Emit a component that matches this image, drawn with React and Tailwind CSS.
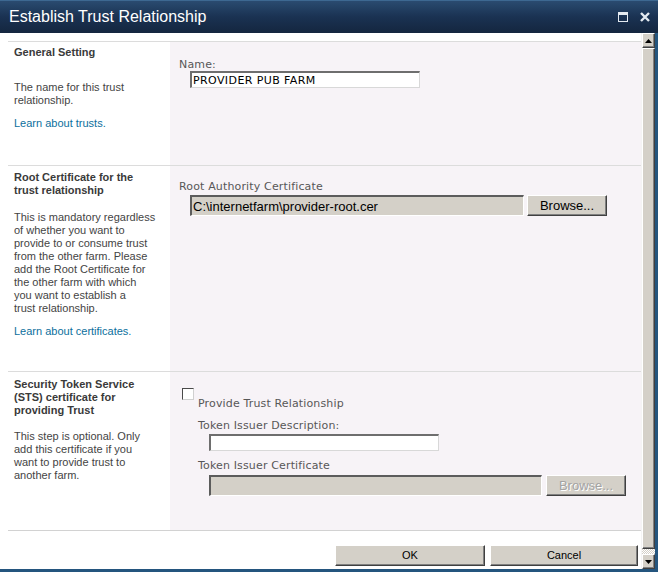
import React from 'react';

const tahoma = "font-['Liberation_Sans',Arial,sans-serif]";
const verdana = "font-['DejaVu_Sans',Verdana,sans-serif]";

const inputBox =
  'bg-white border-t-2 border-l-2 border-b border-r border-t-[#6e6e6e] border-l-[#6e6e6e] border-b-[#d8d8d8] border-r-[#d8d8d8]';
const fileBox =
  'bg-[#d4d0c8] border-t-2 border-l-2 border-b border-r border-t-[#5c5c5c] border-l-[#5c5c5c] border-b-[#ffffff] border-r-[#ffffff]';
const button3d =
  'bg-[#d4d0c8] border border-t-white border-l-white border-b-[#404040] border-r-[#404040] shadow-[inset_-1px_-1px_0_#808080]';

const Label = ({ children, className = '' }) => (
  <div className={`${verdana} text-[11px] leading-[13px] tracking-[0.15px] text-[#575757] whitespace-nowrap ${className}`}>
    {children}
  </div>
);

const Section = ({ left, right, leftPad, rightPad }) => (
  <div className="flex border-t border-[#dcdcdc]">
    <div className={`w-[162px] shrink-0 px-[6px] bg-white ${tahoma} text-[11px] leading-[13px] text-[#444] whitespace-nowrap ${leftPad}`}>
      {left}
    </div>
    <div className={`flex-1 bg-[#f7f3f7] ${rightPad}`}>{right}</div>
  </div>
);

const Heading = ({ children }) => <div className="font-bold text-[#3a3a3a]">{children}</div>;
const Link = ({ children }) => <div className="mt-[10px] text-[#0c6f9d]">{children}</div>;

const BrowseButton = ({ disabled }) => (
  <div
    className={`${button3d} w-[80px] h-[21px] flex items-center justify-center ${tahoma} text-[13px] leading-[15px] ${
      disabled ? 'text-[#a3a3a3] [text-shadow:1px_1px_0_#fff]' : 'text-black'
    }`}
  >
    Browse...
  </div>
);

const ScrollArrow = ({ down }) => (
  <div className={`${button3d} h-[15px] flex items-center justify-center`}>
    <svg width="7" height="4" viewBox="0 0 7 4">
      {down ? <path d="M0 0h7L3.5 4z" fill="#000" /> : <path d="M0 4h7L3.5 0z" fill="#000" />}
    </svg>
  </div>
);

export default function App() {
  return (
    <div className="w-[658px] h-[572px] flex flex-col bg-white overflow-hidden">
      {/* title bar */}
      <div className="h-[33px] shrink-0 flex items-center justify-between bg-gradient-to-b from-[#2a4b70] via-[#1a3252] to-[#14263f] border-t border-[#3d6891]">
        <span className={`pl-[9px] ${tahoma} text-[16px] leading-[18px] text-white`}>Establish Trust Relationship</span>
        <div className="flex items-center gap-[12px] pr-[8px]">
          <svg width="10" height="10" viewBox="0 0 10 10">
            <rect x="0.5" y="0.5" width="9" height="9" fill="none" stroke="#e4eaf0" strokeWidth="1" />
            <rect x="0.5" y="0.5" width="9" height="2.5" fill="#e4eaf0" />
          </svg>
          <svg width="10" height="10" viewBox="0 0 10 10">
            <path d="M1 1L9 9M9 1L1 9" stroke="#e4eaf0" strokeWidth="2.4" />
          </svg>
        </div>
      </div>

      <div className="flex-1 flex border-r-[3px] border-b-[3px] border-[#24557e]">
        <div className="flex-1 flex flex-col pl-[8px] pt-[8px]">
          <Section
            leftPad="pt-[4px]"
            rightPad="pt-[16px] pl-[9px] h-[123px]"
            left={
              <>
                <Heading>General Setting</Heading>
                <div className="mt-[22px]">
                  The name for this trust
                  <br />
                  relationship.
                </div>
                <Link>Learn about trusts.</Link>
              </>
            }
            right={
              <>
                <Label>Name:</Label>
                <div className={`${inputBox} ml-[11px] w-[230px] h-[17px] flex items-center pl-[1px]`}>
                  <span className={`${verdana} text-[11px] leading-[13px] tracking-[0.4px] text-black`}>PROVIDER PUB FARM</span>
                </div>
              </>
            }
          />
          <Section
            leftPad="pt-[5px]"
            rightPad="pt-[14px] pl-[9px] h-[205px]"
            left={
              <>
                <Heading>
                  Root Certificate for the
                  <br />
                  trust relationship
                </Heading>
                <div className="mt-[14px]">
                  This is mandatory regardless
                  <br />
                  of whether you want to
                  <br />
                  provide to or consume trust
                  <br />
                  from the other farm. Please
                  <br />
                  add the Root Certificate for
                  <br />
                  the other farm with which
                  <br />
                  you want to establish a
                  <br />
                  trust relationship.
                </div>
                <Link>Learn about certificates.</Link>
              </>
            }
            right={
              <>
                <Label>Root Authority Certificate</Label>
                <div className="mt-[2px] ml-[11px] flex gap-[3px]">
                  <div className={`${fileBox} w-[334px] h-[21px] flex items-center pl-[1px]`}>
                    <span className={`${tahoma} text-[13px] leading-[15px] text-black`}>C:\internetfarm\provider-root.cer</span>
                  </div>
                  <BrowseButton />
                </div>
              </>
            }
          />
          <div className="border-b border-[#d2d2d2]">
            <Section
              leftPad="pt-[6px]"
              rightPad="pt-[16px] pl-[12px] h-[158px]"
              left={
                <>
                  <Heading>
                    Security Token Service
                    <br />
                    (STS) certificate for
                    <br />
                    providing Trust
                  </Heading>
                  <div className="mt-[13px]">
                    This step is optional. Only
                    <br />
                    add this certificate if you
                    <br />
                    want to provide trust to
                    <br />
                    another farm.
                  </div>
                </>
              }
              right={
                <>
                  <div className="flex items-start">
                    <div className="w-[12px] h-[12px] bg-white border border-t-[#4a4a4a] border-l-[#4a4a4a] border-b-[#d0d0d0] border-r-[#d0d0d0]" />
                    <Label className="ml-[4px] mt-[9px]">Provide Trust Relationship</Label>
                  </div>
                  <div className="pl-[16px]">
                    <Label className="mt-[9px]">Token Issuer Description:</Label>
                    <div className={`${inputBox} mt-[2px] ml-[11px] w-[230px] h-[17px]`} />
                    <Label className="mt-[8px]">Token Issuer Certificate</Label>
                    <div className="mt-[3px] ml-[11px] flex gap-[4px]">
                      <div className={`${fileBox} w-[333px] h-[21px]`} />
                      <BrowseButton disabled />
                    </div>
                  </div>
                </>
              }
            />
          </div>

          {/* footer */}
          <div className="flex justify-end gap-[5px] pt-[14px] pr-[3px]">
            <div className={`${button3d} w-[150px] h-[21px] flex items-center justify-center ${tahoma} text-[11px] leading-[13px] text-black`}>
              OK
            </div>
            <div className={`${button3d} w-[148px] h-[21px] flex items-center justify-center ${tahoma} text-[11px] leading-[13px] text-black`}>
              Cancel
            </div>
          </div>
        </div>

        {/* scrollbar */}
        <div className="w-[14px] shrink-0 flex flex-col bg-[#d4d0c8] border-l border-[#f4f4f4]">
          <ScrollArrow />
          <div className={`${button3d} flex-1`} />
          <div className="h-[5px] bg-[repeating-conic-gradient(#ffffff_0%_25%,#d4d0c8_0%_50%)] bg-[length:2px_2px]" />
          <ScrollArrow down />
        </div>
      </div>
    </div>
  );
}
